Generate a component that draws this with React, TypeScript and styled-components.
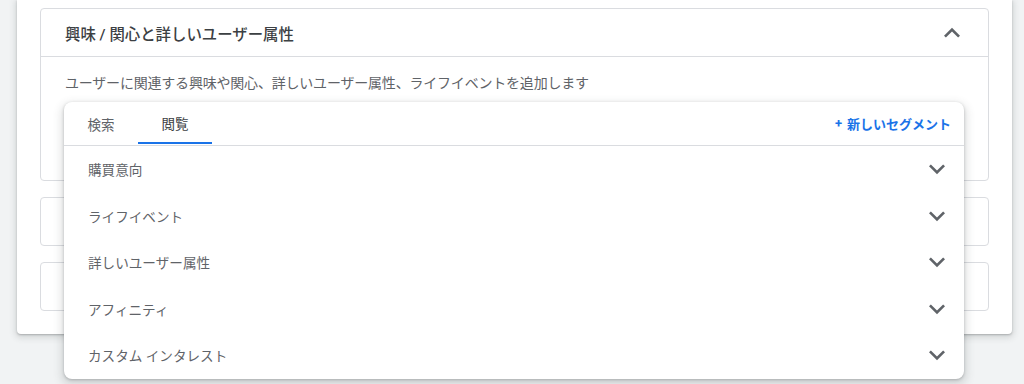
import styled, { createGlobalStyle } from "styled-components";

const GlobalStyle = createGlobalStyle`
  html, body {
    margin: 0;
    padding: 0;
    background: #f1f3f4;
    font-family: Roboto, "Noto Sans CJK JP", "Noto Sans", sans-serif;
    overflow: hidden;
  }
`;

const Page = styled.div`
  width: 1024px;
  height: 384px;
  padding-left: 17px;
  box-sizing: border-box;
`;

const Card = styled.div`
  width: 995px;
  box-sizing: border-box;
  background: #fff;
  padding: 8px 23px 23px;
  border-radius: 0 0 4px 4px;
  box-shadow: 0 1px 2px rgba(60, 64, 67, 0.3), 0 2px 6px 2px rgba(60, 64, 67, 0.15);
  display: flex;
  flex-direction: column;
  gap: 16px;
`;

const Section = styled.div`
  border: 1px solid #dadce0;
  border-radius: 4px;
  background: #fff;
`;

const SectionHeader = styled.div`
  height: 47px;
  display: flex;
  align-items: center;
  justify-content: space-between;
  padding: 0 20px 0 24px;
  border-bottom: 1px solid #dadce0;
`;

const Title = styled.div`
  font-size: 15.4px;
  font-weight: 500;
  color: #3c4043;
`;

const SectionBody = styled.div`
  position: relative;
  height: 123px;
  padding: 16px 24px 0;
  box-sizing: border-box;
`;

const Description = styled.div`
  font-size: 14px;
  letter-spacing: -0.2px;
  color: #5f6368;
  line-height: 20px;
`;

const Collapsed = styled.div`
  height: 47px;
  border: 1px solid #dadce0;
  border-radius: 4px;
`;

const Popup = styled.div`
  position: absolute;
  left: 23px;
  top: 45px;
  width: 900px;
  background: #fff;
  border-radius: 8px;
  box-shadow: 0 1px 3px rgba(60, 64, 67, 0.3), 0 4px 8px 3px rgba(60, 64, 67, 0.15);
  z-index: 2;
`;

const TabBar = styled.div`
  height: 43px;
  display: flex;
  align-items: stretch;
  border-bottom: 1px solid #dadce0;
  padding-right: 13px;
`;

const Tab = styled.div<{ $active?: boolean }>`
  width: 74px;
  display: flex;
  align-items: center;
  justify-content: center;
  font-size: 13.5px;
  color: ${(p) => (p.$active ? "#3c4043" : "#5f6368")};
  box-shadow: ${(p) => (p.$active ? "inset 0 -2px 0 #1a73e8" : "none")};
  margin-bottom: ${(p) => (p.$active ? "1px" : "0")};
`;

const NewSegment = styled.div`
  margin-left: auto;
  display: flex;
  align-items: center;
  font-size: 13px;
  font-weight: 700;
  color: #1a73e8;
  gap: 5px;
`;

const Row = styled.div`
  height: 46.5px;
  display: flex;
  align-items: center;
  justify-content: space-between;
  padding: 0 11px 0 24px;
  font-size: 13.6px;
  color: #5f6368;
`;

const Chevron = ({ up }: { up?: boolean }) => (
  <svg width="32" height="32" viewBox="0 0 24 24" fill="#5f6368">
    {up ? (
      <path d="M12 8l-6 6 1.41 1.41L12 10.83l4.59 4.58L18 14z" />
    ) : (
      <path d="M16.59 8.59L12 13.17 7.41 8.59 6 10l6 6 6-6z" />
    )}
  </svg>
);

const rows = ["購買意向", "ライフイベント", "詳しいユーザー属性", "アフィニティ", "カスタム インタレスト"];

export default function App() {
  return (
    <Page>
      <GlobalStyle />
      <Card>
        <Section>
          <SectionHeader>
            <Title>興味 / 関心と詳しいユーザー属性</Title>
            <Chevron up />
          </SectionHeader>
          <SectionBody>
            <Description>
              ユーザーに関連する興味や関心、詳しいユーザー属性、ライフイベントを追加します
            </Description>
            <Popup>
              <TabBar>
                <Tab>検索</Tab>
                <Tab $active>閲覧</Tab>
                <NewSegment>
                  <span>+</span>
                  <span>新しいセグメント</span>
                </NewSegment>
              </TabBar>
              {rows.map((r) => (
                <Row key={r}>
                  <span>{r}</span>
                  <Chevron />
                </Row>
              ))}
            </Popup>
          </SectionBody>
        </Section>
        <Collapsed />
        <Collapsed />
      </Card>
    </Page>
  );
}
